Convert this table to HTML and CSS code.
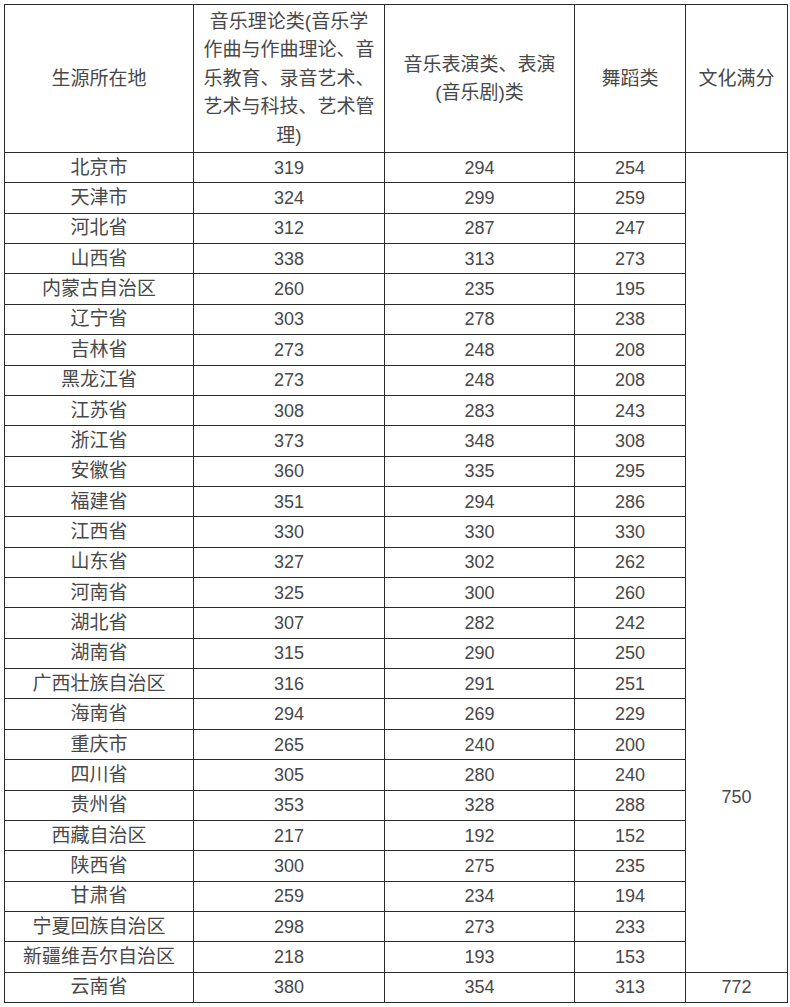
FILE: index.html
```html
<!DOCTYPE html>
<html lang="zh-CN">
<head>
<meta charset="utf-8">
<link rel="stylesheet" href="styles.css">
</head>
<body>
<table class="score-table">
  <colgroup>
    <col class="c1"><col class="c2"><col class="c3"><col class="c4"><col class="c5">
  </colgroup>
  <thead>
    <tr class="head-row">
      <th>生源所在地</th>
      <th>音乐理论类(音乐学<br>作曲与作曲理论、音<br>乐教育、录音艺术、<br>艺术与科技、艺术管<br>理)</th>
      <th>音乐表演类、表演<br>(音乐剧)类</th>
      <th>舞蹈类</th>
      <th>文化满分</th>
    </tr>
  </thead>
  <tbody>
    <tr><td class="name">北京市</td><td>319</td><td>294</td><td>254</td><td class="merged" rowspan="27"><span class="merged-text">750</span></td></tr>
    <tr><td class="name">天津市</td><td>324</td><td>299</td><td>259</td></tr>
    <tr><td class="name">河北省</td><td>312</td><td>287</td><td>247</td></tr>
    <tr><td class="name">山西省</td><td>338</td><td>313</td><td>273</td></tr>
    <tr><td class="name">内蒙古自治区</td><td>260</td><td>235</td><td>195</td></tr>
    <tr><td class="name">辽宁省</td><td>303</td><td>278</td><td>238</td></tr>
    <tr><td class="name">吉林省</td><td>273</td><td>248</td><td>208</td></tr>
    <tr><td class="name">黑龙江省</td><td>273</td><td>248</td><td>208</td></tr>
    <tr><td class="name">江苏省</td><td>308</td><td>283</td><td>243</td></tr>
    <tr><td class="name">浙江省</td><td>373</td><td>348</td><td>308</td></tr>
    <tr><td class="name">安徽省</td><td>360</td><td>335</td><td>295</td></tr>
    <tr><td class="name">福建省</td><td>351</td><td>294</td><td>286</td></tr>
    <tr><td class="name">江西省</td><td>330</td><td>330</td><td>330</td></tr>
    <tr><td class="name">山东省</td><td>327</td><td>302</td><td>262</td></tr>
    <tr><td class="name">河南省</td><td>325</td><td>300</td><td>260</td></tr>
    <tr><td class="name">湖北省</td><td>307</td><td>282</td><td>242</td></tr>
    <tr><td class="name">湖南省</td><td>315</td><td>290</td><td>250</td></tr>
    <tr><td class="name">广西壮族自治区</td><td>316</td><td>291</td><td>251</td></tr>
    <tr><td class="name">海南省</td><td>294</td><td>269</td><td>229</td></tr>
    <tr><td class="name">重庆市</td><td>265</td><td>240</td><td>200</td></tr>
    <tr><td class="name">四川省</td><td>305</td><td>280</td><td>240</td></tr>
    <tr><td class="name">贵州省</td><td>353</td><td>328</td><td>288</td></tr>
    <tr><td class="name">西藏自治区</td><td>217</td><td>192</td><td>152</td></tr>
    <tr><td class="name">陕西省</td><td>300</td><td>275</td><td>235</td></tr>
    <tr><td class="name">甘肃省</td><td>259</td><td>234</td><td>194</td></tr>
    <tr><td class="name">宁夏回族自治区</td><td>298</td><td>273</td><td>233</td></tr>
    <tr><td class="name">新疆维吾尔自治区</td><td>218</td><td>193</td><td>153</td></tr>
    <tr><td class="name">云南省</td><td>380</td><td>354</td><td>313</td><td>772</td></tr>
  </tbody>
</table>
</body>
</html>
```
FILE: styles.css
```css
html, body {
  margin: 0;
  padding: 0;
  background: #ffffff;
}

body {
  padding: 4px 0 0 4px;
  font-family: "Liberation Sans", "Noto Sans CJK SC", sans-serif;
  color: #484848;
}

.score-table {
  border-collapse: collapse;
  table-layout: fixed;
  width: 783px;
  border: 1px solid #2b2b2b;
}

.c1 { width: 189px; }
.c2 { width: 191px; }
.c3 { width: 190px; }
.c4 { width: 111px; }
.c5 { width: 102px; }

.score-table th,
.score-table td {
  border: 1px solid #2b2b2b;
  padding: 0;
  text-align: center;
  vertical-align: middle;
  font-weight: normal;
}

.head-row {
  height: 148px;
}

.head-row th {
  font-size: 19px;
  line-height: 28.5px;
  padding-top: 1px;
}

.score-table tbody tr {
  height: 30.36px;
}

.score-table tbody td {
  font-size: 18px;
  line-height: 20px;
}

.score-table tbody td.name {
  font-size: 19px;
}

.score-table td.merged {
  vertical-align: top;
  padding-top: 634px;
}
```
